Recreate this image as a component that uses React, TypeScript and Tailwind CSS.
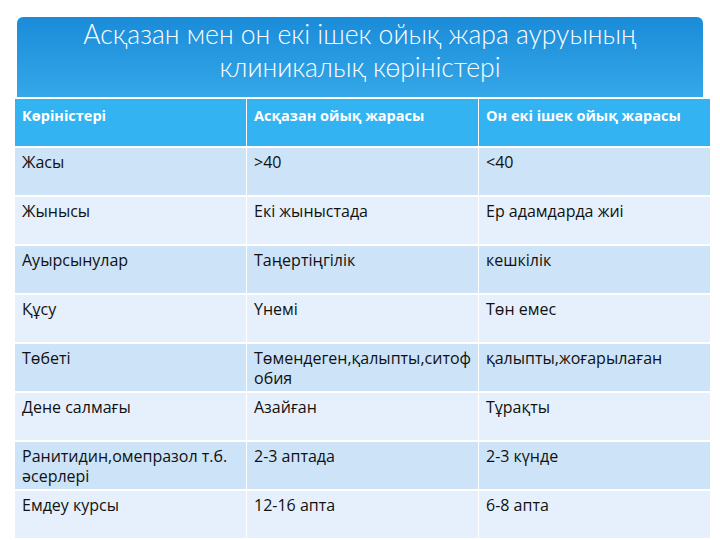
import React from "react";

const rows: string[][][] = [
  [["Жасы"], [">40"], ["<40"]],
  [["Жынысы"], ["Екі жыныстада"], ["Ер адамдарда жиі"]],
  [["Ауырсынулар"], ["Таңертіңгілік"], ["кешкілік"]],
  [["Құсу"], ["Үнемі"], ["Төн емес"]],
  [["Төбеті"], ["Төмендеген,қалыпты,ситоф", "обия"], ["қалыпты,жоғарылаған"]],
  [["Дене салмағы"], ["Азайған"], ["Тұрақты"]],
  [["Ранитидин,омепразол т.б.", "әсерлері"], ["2-3 аптада"], ["2-3 күнде"]],
  [["Емдеу курсы"], ["12-16 апта"], ["6-8 апта"]],
];

export default function App() {
  return (
    <div
      className="w-[720px] h-[540px] bg-white overflow-hidden flex flex-col"
      style={{ fontFamily: "'Open Sans', Lato, sans-serif" }}
    >
      <div
        className="ml-[17px] mr-[17px] mt-[17px] h-[80px] rounded-t-[6px] bg-gradient-to-b from-[#1a8bd8] to-[#34a8e9] flex flex-col items-center pt-[1px] text-white text-[26.5px] leading-[33px] font-light"
        style={{ fontFamily: "Lato, 'Open Sans', sans-serif" }}
      >
        <div>Асқазан мен он екі ішек ойық жара ауруының</div>
        <div>клиникалық көріністері</div>
      </div>
      <div className="ml-[15px] mr-[10px] mt-[2px] grid grid-cols-3 gap-x-[1px] gap-y-[2px] bg-white">
        <div className="h-[47px] bg-[#33b3f2] text-white font-bold text-[14.5px] px-[7px] pt-[6px]">Көріністері</div>
        <div className="h-[47px] bg-[#33b3f2] text-white font-bold text-[14.5px] px-[7px] pt-[6px]">Асқазан ойық жарасы</div>
        <div className="h-[47px] bg-[#33b3f2] text-white font-bold text-[14.5px] px-[7px] pt-[6px]">Он екі ішек ойық жарасы</div>
        {rows.map((r, i) =>
          r.map((c, j) => (
            <div
              key={`${i}-${j}`}
              className={`h-[47px] px-[7px] pt-[4px] text-[16px] leading-[20px] text-[#111] whitespace-nowrap overflow-hidden ${
                i % 2 === 0 ? "bg-[#cde3f8]" : "bg-[#e5f0fc]"
              }`}
            >
              {c.map((l, k) => (
                <div key={k}>{l}</div>
              ))}
            </div>
          ))
        )}
      </div>
    </div>
  );
}
